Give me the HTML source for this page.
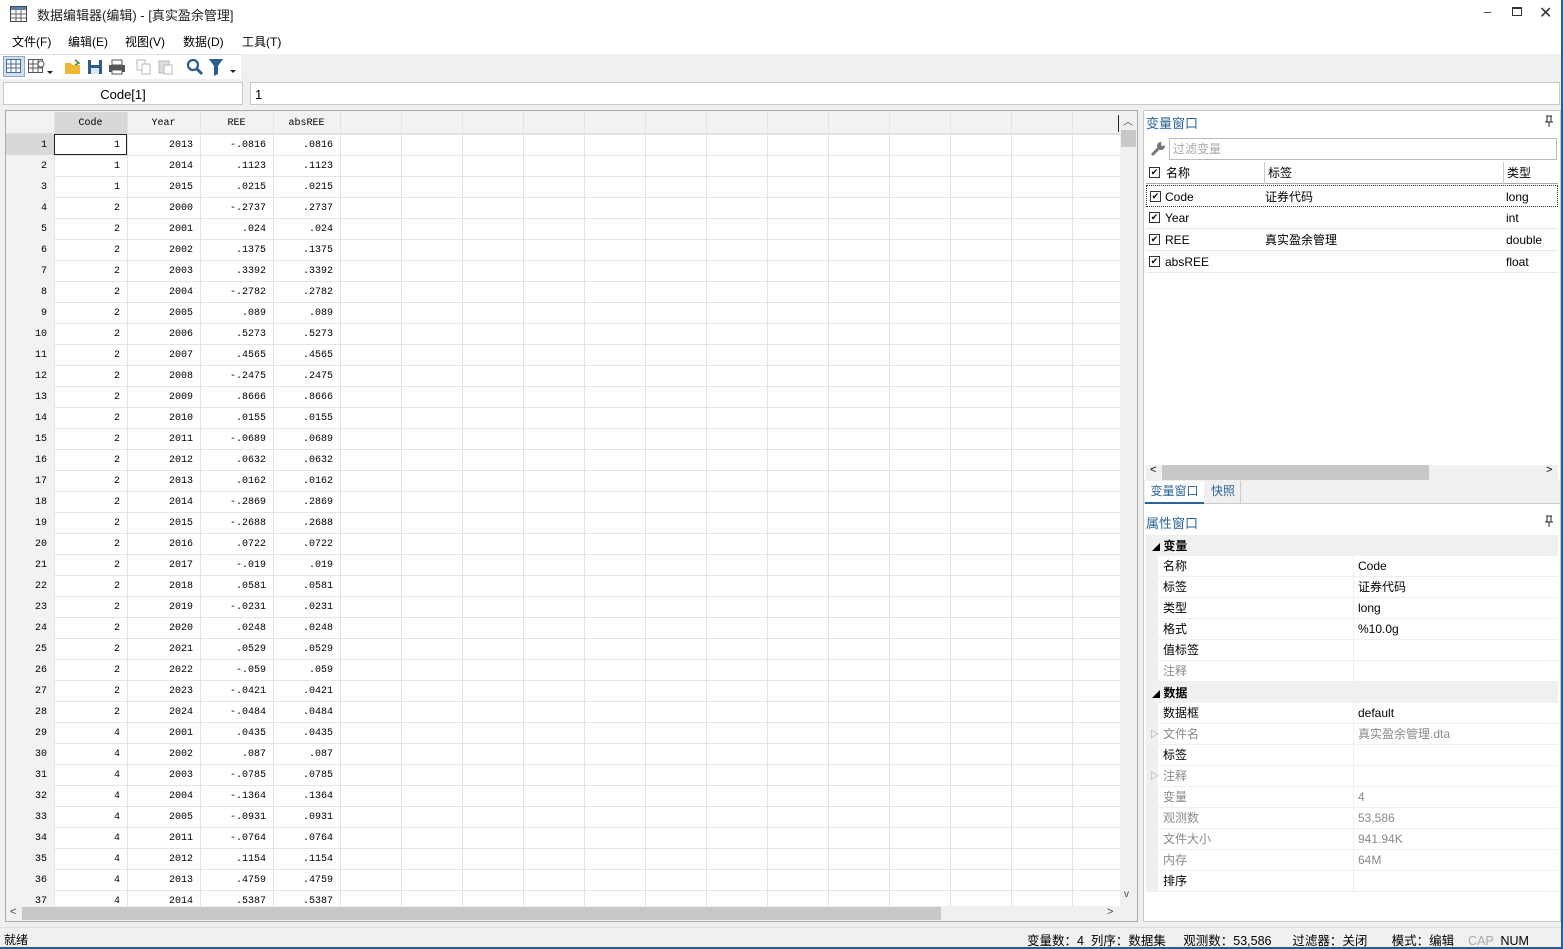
<!DOCTYPE html><html><head><meta charset="utf-8"><style>
*{box-sizing:border-box;margin:0;padding:0}
body{width:1563px;height:949px;overflow:hidden;background:#f0f0f0;font-family:"Liberation Sans","Noto Sans CJK SC",sans-serif;font-size:12px;color:#000;position:relative}
.a{position:absolute}
.mono{font-family:"Liberation Mono","DejaVu Sans Mono",monospace;font-size:10px}
#grid{left:6px;top:112px;width:1114px;height:794px;background:#fff;overflow:hidden;
background-image:linear-gradient(#e4e4e4 1px,transparent 1px);background-size:100% 21px;background-position:0 1px}
.vl{position:absolute;top:0;width:1px;height:795px;background:#e4e4e4}
.r{position:absolute;left:0;height:21px;width:340px}
.r span{position:absolute;top:1px;height:21px;line-height:21px;text-align:right;padding-right:7px}
.pr{position:absolute;left:1158px;width:400px;height:21px;line-height:21px;border-bottom:1px solid #efefef;background:#fff}
.pr b{font-weight:normal;position:absolute;left:5px}
.pr i{font-style:normal;position:absolute;left:195px;border-left:1px solid #efefef;padding-left:4px;height:21px}
.g{color:#8a8a8a}
.vr{position:absolute;left:1146px;width:412px;height:22px;line-height:22px;border-bottom:1px solid #e8e8e8}
.cb{position:absolute;left:3px;top:5px;width:11px;height:11px;border:1px solid #333;font-size:9px;line-height:9px;text-align:center;background:#fff}
.m{position:absolute;top:33px;font-size:12px}
</style></head><body>
<div class="a" style="left:0;top:0;width:1563px;height:30px;background:#fff"></div>
<svg class="a" style="left:10px;top:6px" width="17" height="16"><rect x="0.5" y="0.5" width="16" height="15" fill="#fff" stroke="#444"/><rect x="1" y="1" width="15" height="3" fill="#5b7fa8"/><path d="M1 8H16M1 12H16M6 4V15M11 4V15" stroke="#666"/></svg>
<div class="a" style="left:37px;top:5px;font-size:13px;color:#222">数据编辑器(编辑) - [真实盈余管理]</div>
<div class="a" style="left:1484px;top:4px;font-size:13px;color:#333">–</div>
<div class="a" style="left:1512px;top:7px;width:10px;height:9px;border:1px solid #333;border-top-width:2px"></div>
<div class="a" style="left:1539px;top:3px;font-size:16px;color:#333">✕</div>
<div class="a" style="left:0;top:30px;width:1563px;height:24px;background:#fff"></div>
<div class="m" style="left:12px">文件(F)</div><div class="m" style="left:68px">编辑(E)</div><div class="m" style="left:125px">视图(V)</div><div class="m" style="left:183px">数据(D)</div><div class="m" style="left:242px">工具(T)</div>
<div class="a" style="left:0;top:54px;width:241px;height:25px;background:#fff;border-top:1px solid #e0e0e0"></div>
<div class="a" style="left:3px;top:56px;width:22px;height:21px;background:#cde0f5;border:1px solid #9ab"></div>
<svg class="a" style="left:6px;top:59px" width="16" height="15"><rect x=".5" y=".5" width="14" height="13" fill="#fff" stroke="#4a6a90"/><path d="M1 5H14M1 9H14M5 1V14M10 1V14" stroke="#4a6a90"/></svg>
<svg class="a" style="left:28px;top:59px" width="28" height="18"><rect x=".5" y=".5" width="14" height="13" fill="#fff" stroke="#555"/><path d="M1 5H14M1 9H14M5 1V14M10 1V14" stroke="#555"/><circle cx="13" cy="5" r="3" fill="#fff" stroke="#555"/><path d="M19 12h6l-3 3z" fill="#222"/></svg>
<svg class="a" style="left:64px;top:59px" width="18" height="16"><path d="M1 4h6l1 2h8v9H1z" fill="#f0b830"/><path d="M11 1l4 3-4 2" stroke="#3a8a3a" fill="none" stroke-width="1.5"/></svg>
<svg class="a" style="left:87px;top:59px" width="16" height="16"><rect x="1" y="1" width="14" height="14" fill="#2b5c8e"/><rect x="4" y="1" width="8" height="5" fill="#fff"/><rect x="4" y="9" width="8" height="6" fill="#dfe8f2"/></svg>
<svg class="a" style="left:108px;top:59px" width="18" height="16"><rect x="4" y="1" width="10" height="5" fill="#fff" stroke="#555"/><rect x="1" y="6" width="16" height="7" fill="#555"/><rect x="4" y="11" width="10" height="4" fill="#fff" stroke="#555"/></svg>
<svg class="a" style="left:136px;top:59px" width="16" height="16" opacity=".5"><rect x="1" y="1" width="8" height="10" fill="#fff" stroke="#777"/><rect x="6" y="5" width="8" height="10" fill="#fff" stroke="#777"/></svg>
<svg class="a" style="left:158px;top:59px" width="16" height="16" opacity=".5"><rect x="1" y="2" width="10" height="12" fill="#bbb" stroke="#777"/><rect x="6" y="6" width="8" height="9" fill="#fff" stroke="#777"/></svg>
<svg class="a" style="left:186px;top:58px" width="18" height="18"><circle cx="7" cy="7" r="5" fill="none" stroke="#2b5c8e" stroke-width="2.2"/><path d="M11 11l5 5" stroke="#2b5c8e" stroke-width="3"/></svg>
<svg class="a" style="left:208px;top:58px" width="30" height="20"><path d="M1 1h14l-5 7v8l-4 2V8z" fill="#2b5c8e"/><path d="M22 12h6l-3 3z" fill="#222"/></svg>
<div class="a" style="left:3px;top:82px;width:240px;height:23px;background:#fff;border:1px solid #c8c8c8;text-align:center;line-height:24px;font-size:13px">Code[1]</div>
<div class="a" style="left:250px;top:82px;width:1310px;height:23px;background:#fff;border:1px solid #c8c8c8;line-height:24px;padding-left:4px;font-size:13px">1</div>
<div class="a" style="left:5px;top:110px;width:1133px;height:812px;border:1px solid #aaa;background:#f0f0f0"></div>
<div id="grid" class="a mono">
<div class="a" style="left:0;top:0;width:1114px;height:22px;background:#f2f2f2;border-bottom:1px solid #ddd"></div>
<div class="a" style="left:0;top:22px;width:48px;height:773px;background:#f2f2f2"></div>
<div class="a" style="left:0;top:22px;width:48px;height:21px;background:#d8d8d8"></div>
<div class="a" style="left:48px;top:0;width:73px;height:22px;background:#d8d8d8"></div>
<div class="vl" style="left:48px"></div><div class="vl" style="left:121px"></div><div class="vl" style="left:194px"></div><div class="vl" style="left:267px"></div><div class="vl" style="left:334px"></div><div class="vl" style="left:395px"></div><div class="vl" style="left:456px"></div><div class="vl" style="left:517px"></div><div class="vl" style="left:578px"></div><div class="vl" style="left:639px"></div><div class="vl" style="left:700px"></div><div class="vl" style="left:761px"></div><div class="vl" style="left:822px"></div><div class="vl" style="left:883px"></div><div class="vl" style="left:944px"></div><div class="vl" style="left:1005px"></div><div class="vl" style="left:1066px"></div>
<div class="a" style="top:1px;left:48px;width:73px;text-align:center;line-height:22px">Code</div>
<div class="a" style="top:1px;left:121px;width:73px;text-align:center;line-height:22px">Year</div>
<div class="a" style="top:1px;left:194px;width:73px;text-align:center;line-height:22px">REE</div>
<div class="a" style="top:1px;left:267px;width:67px;text-align:center;line-height:22px">absREE</div>
<div class="a" style="left:48px;top:22px;width:73px;height:21px;border:1px solid #222"></div>
<div id="rows"></div>
<div class="a" style="left:1112px;top:3px;width:1px;height:17px;background:#222"></div>
</div>
<div class="a" style="left:1120px;top:111px;width:17px;height:795px;background:#f0f0f0"></div>
<div class="a" style="left:1121px;top:130px;width:15px;height:17px;background:#c8c8c8"></div>
<div class="a" style="left:1123px;top:113px;font-size:10px;color:#444">︿</div>
<div class="a" style="left:1124px;top:889px;font-size:10px;color:#444">v</div>
<div class="a" style="left:6px;top:906px;width:1114px;height:15px;background:#f0f0f0"></div>
<div class="a" style="left:22px;top:907px;width:919px;height:13px;background:#c8c8c8"></div>
<div class="a" style="left:10px;top:906px;font-size:11px;color:#444">&lt;</div>
<div class="a" style="left:1107px;top:906px;font-size:11px;color:#444">&gt;</div>
<div class="a" style="left:1143px;top:110px;width:418px;height:812px;background:#fff;border:1px solid #c8c8c8"></div>
<div class="a" style="left:1146px;top:113px;font-size:13px;color:#2a6496">变量窗口</div>
<svg class="a" style="left:1545px;top:115px" width="8" height="12"><path d="M1 1h6M2 1v6M6 1v6M0 7h8M4 7v5" stroke="#222" fill="none"/></svg>
<svg class="a" style="left:1150px;top:141px" width="16" height="16"><path d="M2 14l8-8" stroke="#777" stroke-width="3"/><circle cx="11" cy="5" r="4" fill="#777"/><circle cx="13" cy="3" r="2" fill="#fff"/></svg>
<div class="a" style="left:1169px;top:138px;width:388px;height:22px;border:1px solid #bbb;line-height:20px;padding-left:3px;color:#aaa">过滤变量</div>
<div class="vr" style="top:162px;border-bottom:1px solid #aaa"><div class="cb">✔</div><span class="a" style="left:20px">名称</span><span class="a" style="left:118px;border-left:1px solid #ccc;padding-left:3px">标签</span><span class="a" style="left:357px;border-left:1px solid #ccc;padding-left:3px">类型</span></div>
<div class="vr" style="top:185px;border:1px dotted #333"><div class="cb">✔</div><span class="a" style="left:18px">Code</span><span class="a" style="left:118px">证券代码</span><span class="a" style="left:359px">long</span></div>
<div class="vr" style="top:207px"><div class="cb">✔</div><span class="a" style="left:19px">Year</span><span class="a" style="left:360px">int</span></div>
<div class="vr" style="top:229px"><div class="cb">✔</div><span class="a" style="left:19px">REE</span><span class="a" style="left:119px">真实盈余管理</span><span class="a" style="left:360px">double</span></div>
<div class="vr" style="top:251px"><div class="cb">✔</div><span class="a" style="left:19px">absREE</span><span class="a" style="left:360px">float</span></div>
<div class="a" style="left:1146px;top:465px;width:412px;height:15px;background:#f0f0f0"></div>
<div class="a" style="left:1162px;top:465px;width:267px;height:15px;background:#c8c8c8"></div>
<div class="a" style="left:1150px;top:464px;font-size:11px">&lt;</div>
<div class="a" style="left:1546px;top:464px;font-size:11px">&gt;</div>
<div class="a" style="left:1144px;top:480px;width:416px;height:24px;background:#f0f0f0;border-bottom:1px solid #ccc"></div>
<div class="a" style="left:1145px;top:481px;width:59px;height:23px;background:#fff;border-bottom:2px solid #2a6496;text-align:center;line-height:20px;color:#2a6496">变量窗口</div>
<div class="a" style="left:1206px;top:481px;width:35px;height:22px;border-right:1px solid #ccc;text-align:center;line-height:20px;color:#2a6496">快照</div>
<div class="a" style="left:1146px;top:513px;font-size:13px;color:#2a6496">属性窗口</div>
<svg class="a" style="left:1545px;top:515px" width="8" height="12"><path d="M1 1h6M2 1v6M6 1v6M0 7h8M4 7v5" stroke="#222" fill="none"/></svg>
<div class="a" style="left:1146px;top:535px;width:412px;height:357px;background:#f0f0f0"></div>
<div class="a" style="left:1146px;top:536px;width:412px;height:21px;line-height:21px;padding-left:6px"><span style="font-size:8px">◢</span> <b style="font-weight:600">变量</b></div>
<div class="pr" style="top:556px"><b>名称</b><i>Code</i></div>
<div class="pr" style="top:577px"><b>标签</b><i>证券代码</i></div>
<div class="pr" style="top:598px"><b>类型</b><i>long</i></div>
<div class="pr" style="top:619px"><b>格式</b><i>%10.0g</i></div>
<div class="pr" style="top:640px"><b>值标签</b><i></i></div>
<div class="pr g" style="top:661px"><b>注释</b><i></i></div>
<div class="a" style="left:1146px;top:683px;width:412px;height:21px;line-height:21px;padding-left:6px"><span style="font-size:8px">◢</span> <b style="font-weight:600">数据</b></div>
<div class="pr" style="top:703px"><b>数据框</b><i>default</i></div>
<div class="pr g" style="top:724px"><b>文件名</b><i>真实盈余管理.dta</i></div>
<div class="pr" style="top:745px"><b>标签</b><i></i></div>
<div class="pr g" style="top:766px"><b>注释</b><i></i></div>
<div class="pr g" style="top:787px"><b>变量</b><i>4</i></div>
<div class="pr g" style="top:808px"><b>观测数</b><i>53,586</i></div>
<div class="pr g" style="top:829px"><b>文件大小</b><i>941.94K</i></div>
<div class="pr g" style="top:850px"><b>内存</b><i>64M</i></div>
<div class="pr" style="top:871px"><b>排序</b><i></i></div>
<div class="a g" style="left:1150px;top:727px;font-size:9px">▷</div>
<div class="a g" style="left:1150px;top:769px;font-size:9px">▷</div>
<div class="a" style="left:1146px;top:892px;width:412px;height:28px;background:#fff"></div>
<div class="a" style="left:0;top:927px;width:1563px;height:22px;background:#f0f0f0;border-top:1px solid #ddd"></div>
<div class="a" style="left:4px;top:931px">就绪</div>
<div class="a" style="left:1027px;top:930px;white-space:pre;font-size:12.5px">变量数：4  列序：数据集     观测数：53,586      过滤器：关闭       模式：编辑    <span style="color:#aaa">CAP</span>  NUM</div>
<div class="a" style="left:1561px;top:0;width:2px;height:949px;background:#2b5c8e"></div>
<div class="a" style="left:0;top:947px;width:1563px;height:2px;background:#2b5c8e"></div>
<script>
var d=[[1,2013,"-.0816",".0816"],[1,2014,".1123",".1123"],[1,2015,".0215",".0215"],[2,2000,"-.2737",".2737"],[2,2001,".024",".024"],[2,2002,".1375",".1375"],[2,2003,".3392",".3392"],[2,2004,"-.2782",".2782"],[2,2005,".089",".089"],[2,2006,".5273",".5273"],[2,2007,".4565",".4565"],[2,2008,"-.2475",".2475"],[2,2009,".8666",".8666"],[2,2010,".0155",".0155"],[2,2011,"-.0689",".0689"],[2,2012,".0632",".0632"],[2,2013,".0162",".0162"],[2,2014,"-.2869",".2869"],[2,2015,"-.2688",".2688"],[2,2016,".0722",".0722"],[2,2017,"-.019",".019"],[2,2018,".0581",".0581"],[2,2019,"-.0231",".0231"],[2,2020,".0248",".0248"],[2,2021,".0529",".0529"],[2,2022,"-.059",".059"],[2,2023,"-.0421",".0421"],[2,2024,"-.0484",".0484"],[4,2001,".0435",".0435"],[4,2002,".087",".087"],[4,2003,"-.0785",".0785"],[4,2004,"-.1364",".1364"],[4,2005,"-.0931",".0931"],[4,2011,"-.0764",".0764"],[4,2012,".1154",".1154"],[4,2013,".4759",".4759"],[4,2014,".5387",".5387"]];
var h="";d.forEach(function(r,i){var t=22+i*21;h+='<div class="r" style="top:'+t+'px"><span style="left:0;width:48px">'+(i+1)+'</span><span style="left:48px;width:73px">'+r[0]+'</span><span style="left:121px;width:73px">'+r[1]+'</span><span style="left:194px;width:73px">'+r[2]+'</span><span style="left:267px;width:67px">'+r[3]+'</span></div>';});
document.getElementById("rows").innerHTML=h;
</script>
</body></html>
